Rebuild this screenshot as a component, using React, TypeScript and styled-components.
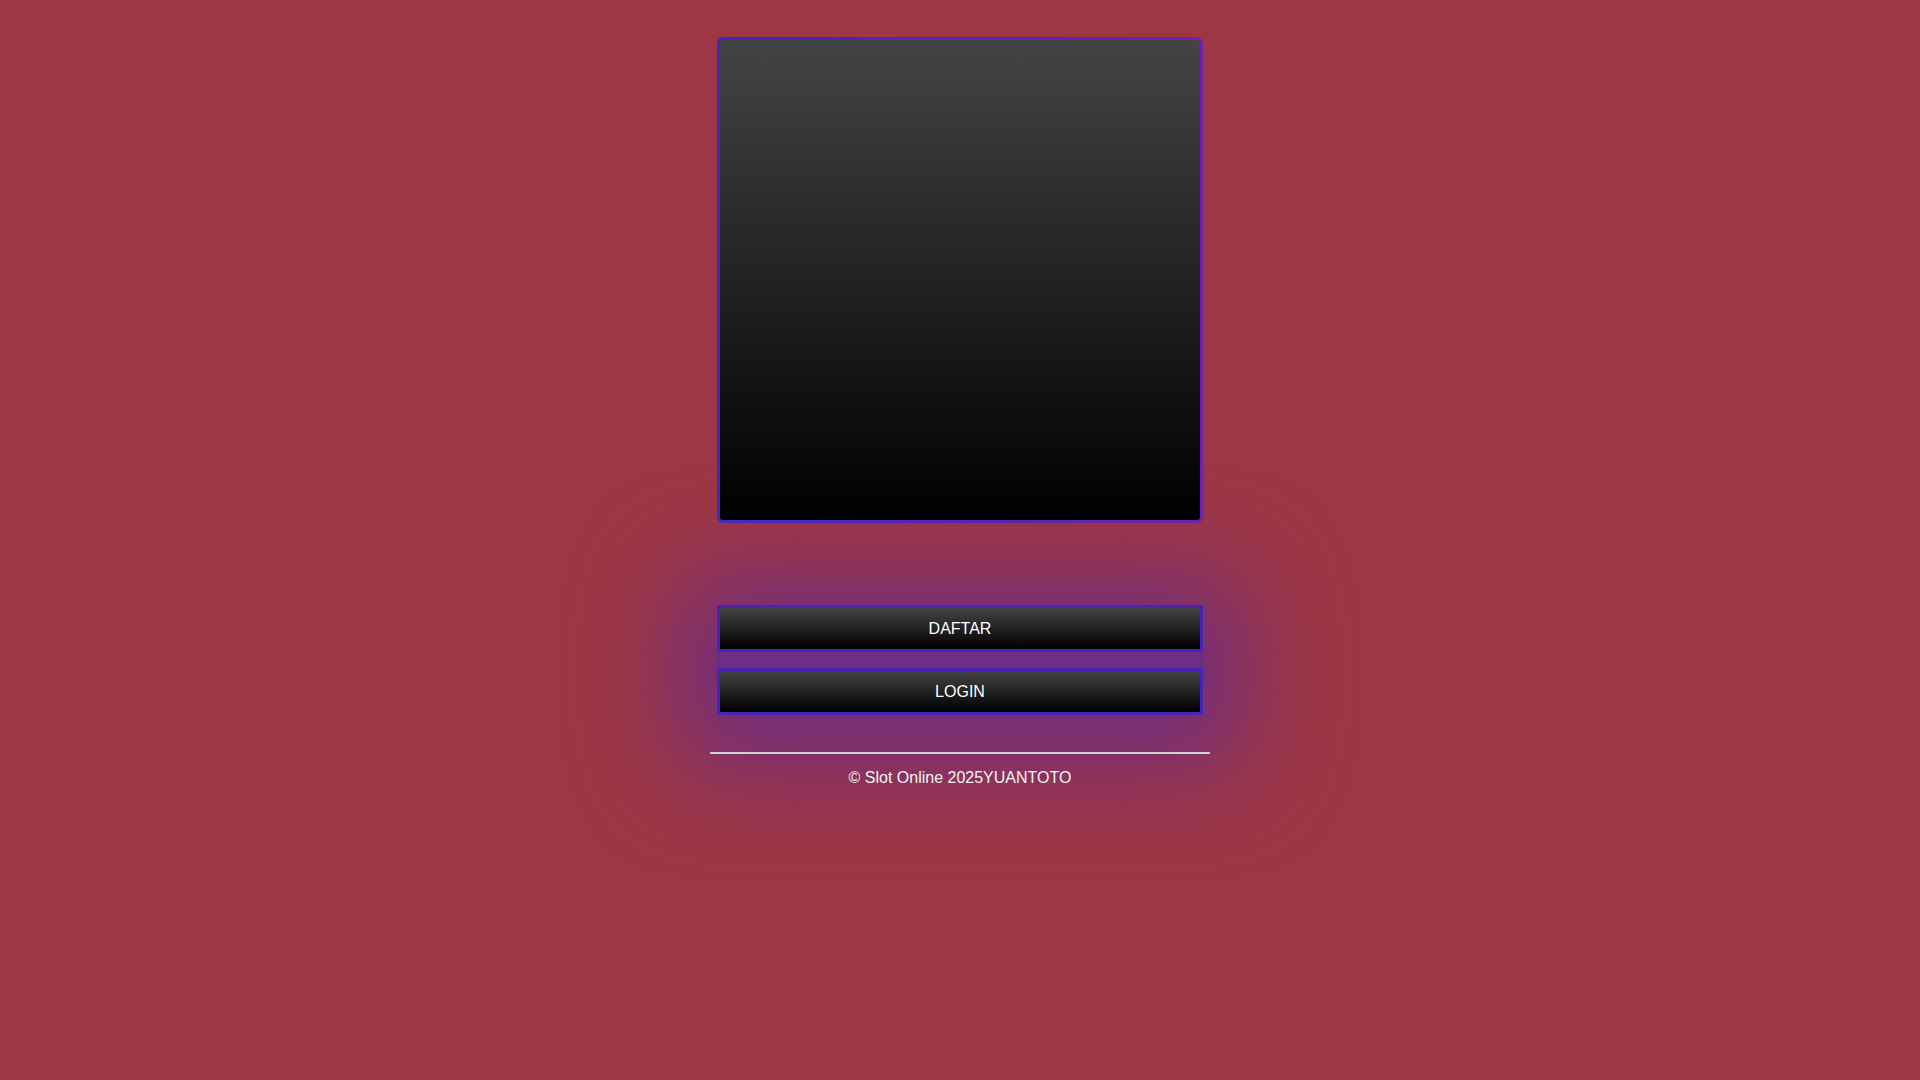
import React from 'react';
import styled, { createGlobalStyle } from 'styled-components';

const GlobalStyle = createGlobalStyle`
  html {
    background: #9e3745;
  }
  body {
    margin: 0;
    padding: 0;
    font-family: "Liberation Sans", Arial, sans-serif;
    color: #fff;
  }
`;

const glow = 'rgba(80, 40, 170, 0.62)';

const Page = styled.main`
  box-sizing: border-box;
  width: 500px;
  min-height: 100vh;
  margin: 0 auto;
  padding-top: 37px;
  display: flex;
  flex-direction: column;
  align-items: center;
`;

const Banner = styled.div`
  position: relative;
  z-index: 1;
  width: 480px;
  height: 480px;
  border: 3px solid transparent;
  border-radius: 6px;
  background:
    linear-gradient(180deg, #444444 0%, #000000 100%) padding-box,
    linear-gradient(90deg, #4429b8 0%, #5a24b5 60%, #7220b0 100%) border-box;
`;

const Actions = styled.section`
  width: 500px;
  margin-top: 82px;
  display: flex;
  flex-direction: column;
  align-items: center;
`;

const ButtonList = styled.div`
  display: flex;
  flex-direction: column;
  gap: 16px;
  background: ${glow};
  box-shadow: 0 12px 100px 35px ${glow};
`;

const ActionButton = styled.a`
  display: flex;
  align-items: center;
  justify-content: center;
  box-sizing: border-box;
  width: 486px;
  height: 47px;
  border: 3px solid #4724b8;
  background: linear-gradient(180deg, #444444 0%, #000000 100%);
  color: #fff;
  font-size: 16px;
  text-decoration: none;
  cursor: pointer;
`;

const Divider = styled.hr`
  width: 500px;
  margin: 37px 0 0;
  border: none;
  border-top: 2px solid #d0d0d0;
`;

const Footer = styled.footer`
  margin-top: 15px;
  font-size: 16px;
  color: #f2f2f2;
`;

export default function App() {
  return (
    <>
      <GlobalStyle />
      <Page>
        <Banner />
        <Actions>
          <ButtonList>
            <ActionButton>DAFTAR</ActionButton>
            <ActionButton>LOGIN</ActionButton>
          </ButtonList>
          <Divider />
          <Footer>© Slot Online 2025YUANTOTO</Footer>
        </Actions>
      </Page>
    </>
  );
}
